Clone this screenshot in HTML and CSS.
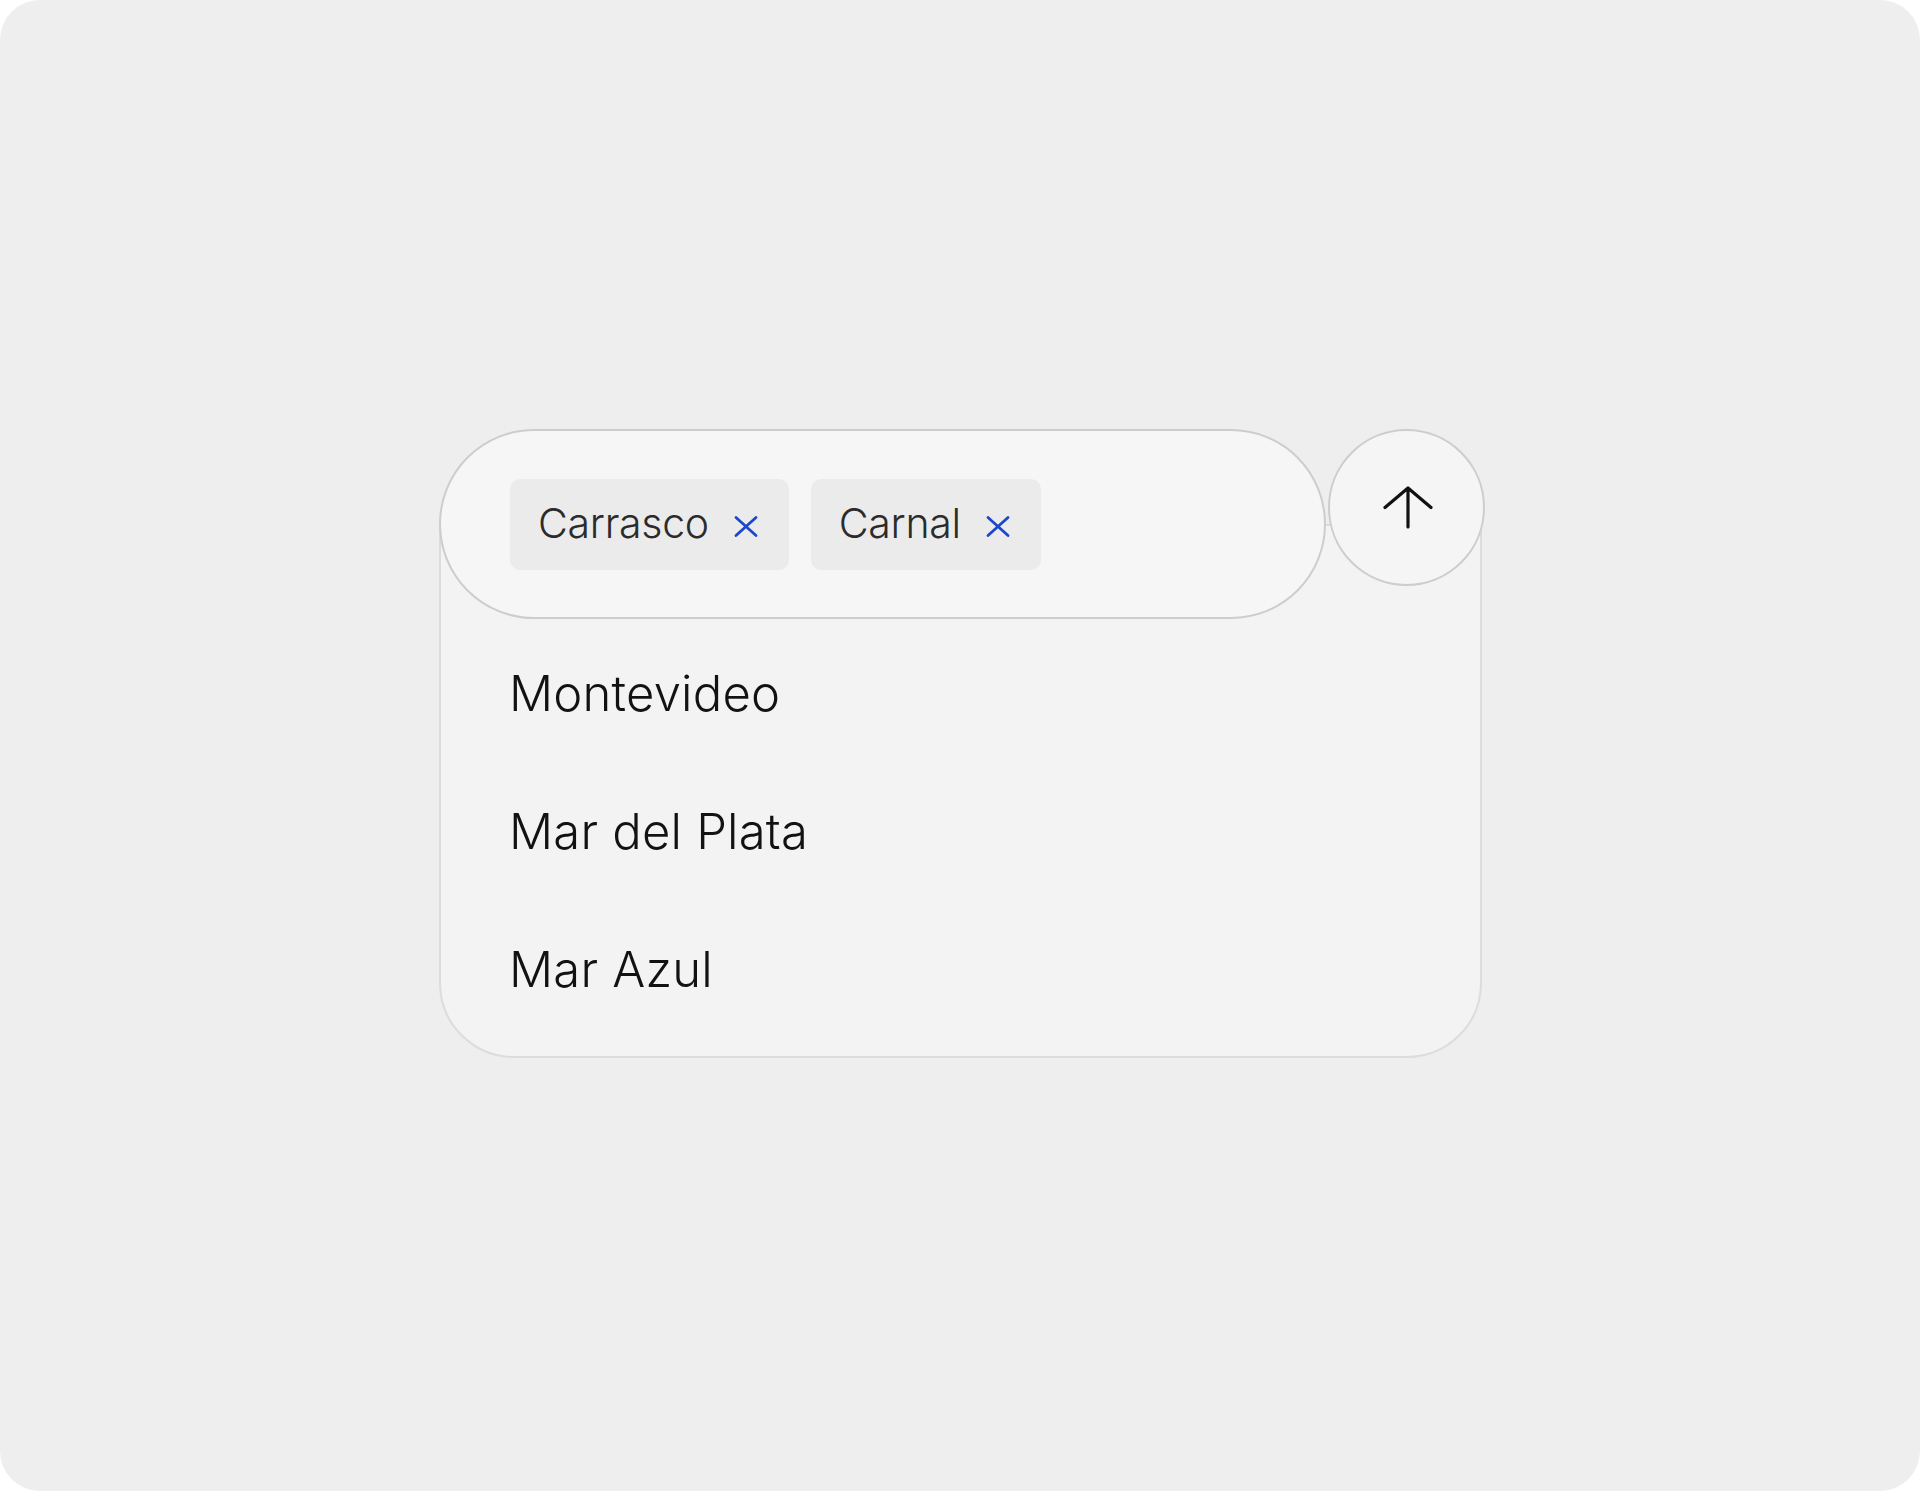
FILE: index.html
```html
<!DOCTYPE html>
<html lang="es">
<head>
<meta charset="utf-8">
<title>Selector de destinos</title>
<link rel="stylesheet" href="styles.css">
</head>
<body>
<div class="page">
  <div class="widget">
    <div class="top">
      <div class="pill">
        <div class="chip">
          <span class="chip-label">Carrasco</span>
          <svg class="chip-x" width="24" height="23" viewBox="0 0 24 23"><path d="M2 2.5 L22 20.5 M22 2.5 L2 20.5"/></svg>
        </div>
        <div class="chip">
          <span class="chip-label">Carnal</span>
          <svg class="chip-x" width="24" height="23" viewBox="0 0 24 23"><path d="M2 2.5 L22 20.5 M22 2.5 L2 20.5"/></svg>
        </div>
      </div>
      <div class="send">
        <svg width="52" height="43" viewBox="0 0 52 43"><path d="M3 21.5 L26 2 L49 21.5 M26 2 V41"/></svg>
      </div>
    </div>
    <div class="card">
      <ul class="list">
        <li class="item">Montevideo</li>
        <li class="item">Mar del Plata</li>
        <li class="item">Mar Azul</li>
      </ul>
    </div>
  </div>
</div>
</body>
</html>
```

FILE: styles.css
```css
html, body {
  margin: 0;
  padding: 0;
  background: #ffffff;
}

.page {
  height: 1491px;
  border-radius: 40px;
  background: #eeeeee;
  display: flex;
  align-items: center;
  justify-content: center;
  padding: 0 0 4px 4px;
  box-sizing: border-box;
  font-family: "Inter", "Noto Sans", sans-serif;
}

.widget {
  width: 1046px;
  display: flex;
  flex-direction: column;
}

.top {
  position: relative;
  z-index: 1;
  display: flex;
  align-items: flex-start;
  gap: 2px;
}

.pill {
  width: 887px;
  height: 190px;
  box-sizing: border-box;
  border: 2px solid #cdcdcd;
  border-radius: 95px;
  background: #f6f6f6;
  display: flex;
  align-items: center;
  gap: 22px;
  padding-left: 69px;
}

.chip {
  height: 91px;
  box-sizing: border-box;
  background: #ebebeb;
  border-radius: 10px;
  display: flex;
  align-items: center;
  gap: 25px;
  padding: 0 31px 0 28px;
}

.chip-label {
  font-size: 41px;
  font-weight: 300;
  letter-spacing: -0.3px;
  color: #2b2b2b;
  line-height: 1;
  margin-top: -2px;
}

.chip-x {
  margin-top: 4px;
  fill: none;
  stroke: #1b47cc;
  stroke-width: 2.8;
  stroke-linecap: round;
}

.send {
  width: 157px;
  height: 157px;
  box-sizing: border-box;
  border: 2px solid #cdcdcd;
  border-radius: 50%;
  background: #f5f5f5;
  display: flex;
  align-items: center;
  justify-content: center;
}

.send svg {
  fill: none;
  stroke: #111111;
  stroke-width: 3.2;
  stroke-linecap: round;
  stroke-linejoin: round;
  margin-left: 2px;
}

.card {
  width: 1043px;
  box-sizing: border-box;
  margin-top: -95px;
  padding-top: 95px;
  border: 2px solid #dcdcdc;
  border-radius: 0 0 75px 75px;
  background: #f3f3f3;
}

.list {
  list-style: none;
  margin: 0;
  padding: 4px 0 17px 68px;
}

.item {
  font-size: 49px;
  font-weight: 350;
  letter-spacing: 0.2px;
  line-height: 138px;
  height: 138px;
  color: #121212;
}
```
